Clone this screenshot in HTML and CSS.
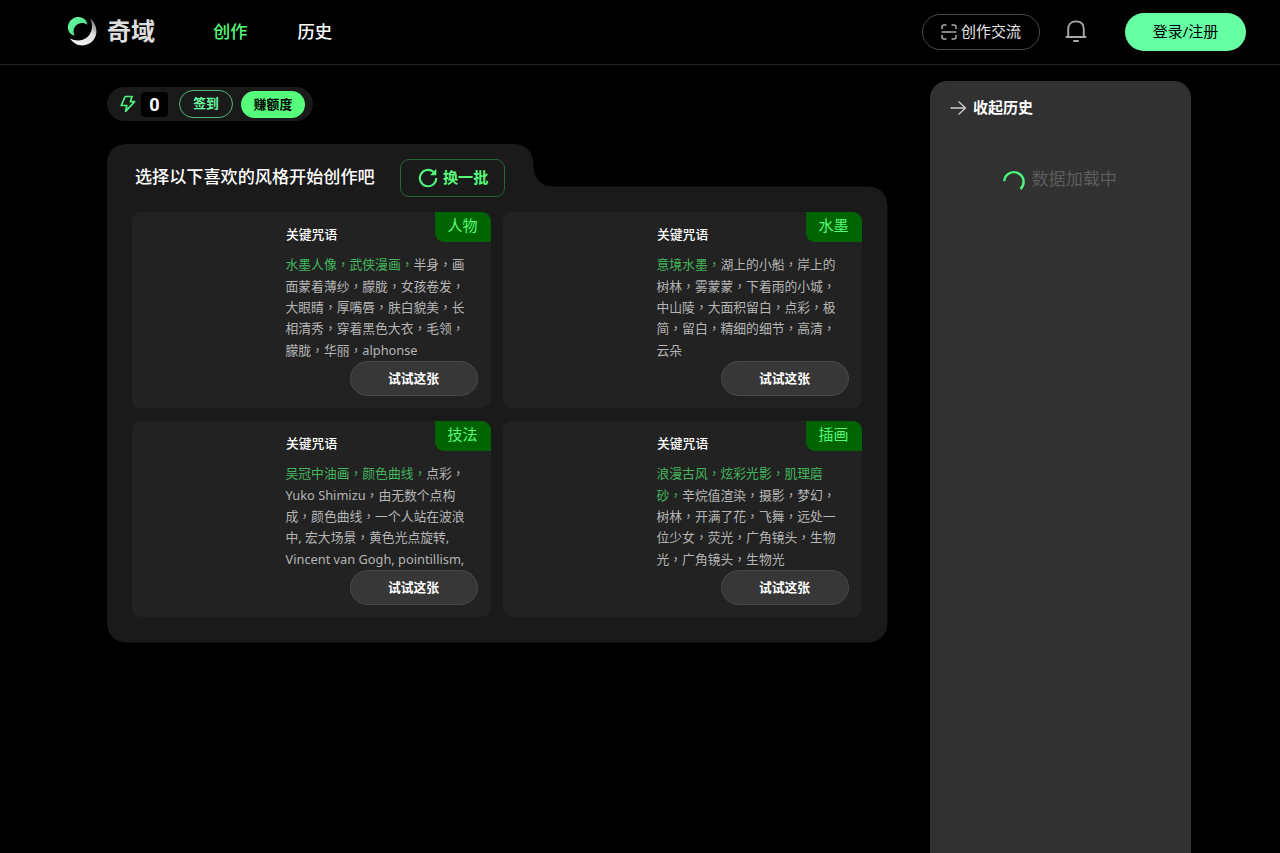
FILE: index.html
```html
<!DOCTYPE html>
<html lang="zh-CN">
<head>
<meta charset="utf-8">
<title>奇域</title>
<link rel="stylesheet" href="styles.css">
</head>
<body>
<header class="header">
  <div class="logo">
    <svg width="32" height="32" viewBox="0 0 32 32">
      <defs>
        <linearGradient id="silver" x1="0" y1="1" x2="1" y2="0"><stop offset="0" stop-color="#fff"/><stop offset=".65" stop-color="#ddd"/><stop offset="1" stop-color="#555"/></linearGradient>
        <linearGradient id="mint" x1="0" y1="0" x2="1" y2="1"><stop offset="0" stop-color="#67ffa4"/><stop offset="1" stop-color="#4ccf80"/></linearGradient>
      </defs>
      <path d="M8.500 20C3 18 .5 13 2.500 8C5 2 10 .2 14.500 1.200C18.500 2.200 21 5 21.500 8.800C17.500 6 13 6.500 10 9.500C7.200 12.500 7.200 16 8.500 20Z" fill="url(#mint)"/>
      <path d="M24.500 2.500C31 8 32.500 18 27.500 24C21 32 9 31 4 22.300C9.500 25.500 17 25.500 22 20.500C26.500 16 27 9 24.500 2.500Z" fill="url(#silver)"/>
    </svg>
    <span class="logo-text">奇域</span>
  </div>
  <nav class="nav"><a class="active">创作</a><a>历史</a></nav>
  <div class="actions">
    <div class="chat">
      <svg width="16" height="16" viewBox="0 0 16 16" fill="none" stroke="#aaa" stroke-width="1.5"><path d="M1 5V3Q1 1 3 1H5.5M10.5 1H13Q15 1 15 3V5M15 11V13Q15 15 13 15H10.5M5.5 15H3Q1 15 1 13V11M.5 8H15.5"/></svg>
      <span>创作交流</span>
    </div>
    <svg class="bell" width="22" height="24" viewBox="0 0 22 24" fill="none" stroke="#a6a6a6" stroke-width="1.9"><path d="M3.2 18V10.2C3.2 5 6.5 2.4 11 2.4S18.800 5 18.800 10.200V18M.7 18H21.300M8.200 22H13.800"/></svg>
    <div class="login">登录/注册</div>
  </div>
</header>
<main class="main">
  <section class="create">
    <div class="quota">
      <svg class="bolt" width="16" height="18" viewBox="0 0 16 18" fill="none" stroke="#4df57b" stroke-width="1.700" stroke-linejoin="round"><path d="M5.200 1.500H12L10.400 6.700H14.600L5.600 16.400L6.800 10.500H1.200Z"/></svg>
      <span class="count">0</span>
      <span class="sign">签到</span>
      <span class="earn">赚额度</span>
    </div>
    <div class="panel">
      <svg class="panel-shape" width="781" height="499" viewBox="0 0 781 499"><path fill="#1a1a1a" d="M21 0H405Q426 0 426.500 21Q427 42.500 448 42.500H759Q780.500 42.500 780.500 64V477Q780.500 498.500 759 498.500H21Q0 498.500 0 477V21Q0 0 21 0Z"/></svg>
      <div class="panel-head">
        <h1>选择以下喜欢的风格开始创作吧</h1>
        <div class="change">
          <svg width="20" height="20" viewBox="0 0 20 20" fill="none" stroke="#4df57b" stroke-width="2.1"><path d="M18.300 10A8.200 8.200 0 1 1 15.600 4"/><path fill="#4df57b" stroke="none" d="M18.300 .8V7.200H12Z"/></svg>
          <span>换一批</span>
        </div>
      </div>
      <div class="cards">
        <article class="card"><span class="tag">人物</span><h2>关键咒语</h2>
          <p lang="zh-TW"><em>水墨人像，武侠漫画，</em>半身，画<br>面蒙着薄纱，朦胧，女孩卷发，<br>大眼睛，厚嘴唇，肤白貌美，长<br>相清秀，穿着黑色大衣，毛领，<br>朦胧，华丽，alphonse</p><span class="try">试试这张</span></article>
        <article class="card"><span class="tag">水墨</span><h2>关键咒语</h2>
          <p lang="zh-TW"><em>意境水墨，</em>湖上的小船，岸上的<br>树林，雾蒙蒙，下着雨的小城，<br>中山陵，大面积留白，点彩，极<br>简，留白，精细的细节，高清，<br>云朵</p><span class="try">试试这张</span></article>
        <article class="card"><span class="tag">技法</span><h2>关键咒语</h2>
          <p lang="zh-TW"><em>吴冠中油画，颜色曲线，</em>点彩，<br>Yuko Shimizu，由无数个点构<br>成，颜色曲线，一个人站在波浪<br>中, 宏大场景，黄色光点旋转,<br>Vincent van Gogh, pointillism,</p><span class="try">试试这张</span></article>
        <article class="card"><span class="tag">插画</span><h2>关键咒语</h2>
          <p lang="zh-TW"><em>浪漫古风，炫彩光影，肌理磨<br>砂，</em>辛烷值渲染，摄影，梦幻，<br>树林，开满了花，飞舞，远处一<br>位少女，荧光，广角镜头，生物<br>光，广角镜头，生物光</p><span class="try">试试这张</span></article>
      </div>
    </div>
  </section>
  <aside class="history">
    <div class="collapse">
      <svg width="17" height="16" viewBox="0 0 17 16" fill="none" stroke="#ccc" stroke-width="1.3"><path d="M.5 8H15.500M8.500 1.500L15.500 8L8.500 14.500"/></svg>
      <span>收起历史</span>
    </div>
    <div class="loading">
      <svg width="24" height="24" viewBox="0 0 24 24" fill="none" stroke="#4df57b" stroke-width="2.4"><path d="M2.200 12.200A9.700 9.700 0 1 1 18.500 20"/></svg>
      <span>数据加载中</span>
    </div>
  </aside>
</main>
</body>
</html>
```
FILE: styles.css
```css
* { box-sizing: border-box; }
body { margin: 0; height: 853px; overflow: hidden; background: #000; color: #fff; font-family: "Noto Sans", "Noto Sans CJK SC", sans-serif; font-size: 15px; white-space: nowrap; }
svg { display: block; flex: none; }
.header { height: 65px; border-bottom: 1px solid #262626; display: flex; align-items: center; padding: 0 34px 0 66px; }
.logo { display: flex; align-items: center; width: 147px; gap: 9px; }
.logo-text { font-size: 24px; line-height: 32px; color: #ddd; font-weight: 700; font-family: "Noto Sans CJK SC", sans-serif; margin-top: -4px; }
.nav { display: flex; gap: 50px; font-size: 17.3px; font-weight: 500; line-height: 24px; margin-top: -2px; font-family: "Noto Sans CJK SC", sans-serif; }
.nav .active { color: #55fb79; }
.actions { display: flex; align-items: center; margin-left: auto; }
.chat { width: 118px; height: 36px; border: 1px solid #484848; border-radius: 18px; display: flex; align-items: center; padding-left: 18px; gap: 4px; color: #e6e6e6; }
.chat span { margin-top: -3px; }
.bell { margin: 0 38px 3px 25px; }
.login { width: 121px; height: 38px; border-radius: 19px; background: #67ffa4; color: #000; text-align: center; line-height: 36px; }
.main { display: flex; padding: 16px 0 0 107px; align-items: flex-start; }
.create { width: 781px; padding-top: 6px; }
.quota { width: 206px; height: 34px; border-radius: 17px; background: #1a1a1a; display: flex; align-items: center; padding-left: 13px; font-size: 12.8px; font-weight: 700; line-height: 25px; }
.count { width: 27px; height: 25px; margin: 0 11px 0 5px; border-radius: 4px; background: #000; text-align: center; font: 700 18px/25px Roboto, sans-serif; }
.sign { width: 54px; height: 28px; border: 1.500px solid #4cb778; border-radius: 14px; text-align: center; color: #67ffa4; margin-right: 8px; }
.earn { width: 64px; height: 27px; border-radius: 14px; background: #55ff7c; color: #000; text-align: center; line-height: 26px; }
.panel { position: relative; margin-top: 23px; height: 499px; padding: 15px 26px 0 25px; }
.panel-shape { position: absolute; inset: 0; }
.panel-head { position: relative; display: flex; height: 38px; padding-left: 3px; gap: 25px; }
h1 { margin: 0; width: 240px; font-size: 17.14px; line-height: 34px; font-weight: 500; font-family: "Noto Sans CJK SC", sans-serif; }
.change { width: 105px; height: 38px; border: 1px solid #296637; border-radius: 9px; display: flex; align-items: center; padding-left: 17px; gap: 5px; color: #55fb79; font-weight: 700; font-size: 15.1px; line-height: 34px; }
.change span { margin-top: -3px; }
.cards { position: relative; margin-top: 15px; display: grid; grid-template-columns: 358.500px 358.500px; grid-auto-rows: 196px; gap: 13px 12.500px; }
.card { position: relative; background: #222; border-radius: 9px; padding: 12px 0 0 153.500px; }
.tag { position: absolute; right: 0; top: 0; width: 56px; height: 30px; background: #006500; border-radius: 0 9px 0 9px; color: #55fb79; text-align: center; line-height: 27px; font-size: 15px; }
h2 { margin: 0 0 10.400px; font-size: 12.8px; line-height: 20px; font-weight: 500; padding-left: .5px; }
.card p { margin: 0; font-family: "Noto Sans", "Noto Sans CJK TC", sans-serif; font-size: 12.8px; line-height: 21.330px; color: #b5b5b5; }
.card em { font-style: normal; color: #43b55c; }
.try { position: absolute; right: 13px; bottom: 12px; width: 128px; height: 35px; border: 1px solid #484848; border-radius: 18px; background: #373737; text-align: center; font-size: 12.8px; line-height: 32px; font-weight: 700; }
.history { margin-left: 42px; width: 260.500px; height: 790px; border-radius: 17px 17px 0 0; background: #313131; padding: 15px 20px; }
.collapse { display: flex; align-items: center; gap: 6px; font-weight: 700; line-height: 22px; height: 22px; }
.collapse svg { margin-top: 1px; }
.collapse span { margin-top: -1px; }
.loading { display: flex; align-items: center; gap: 6px; height: 24px; margin: 50px 0 0 51.500px; font-size: 17.100px; line-height: 24px; color: #5c5c5c; font-weight: 400; }
.loading svg { margin-top: 1px; }
.loading span { margin-top: -2px; }
```
